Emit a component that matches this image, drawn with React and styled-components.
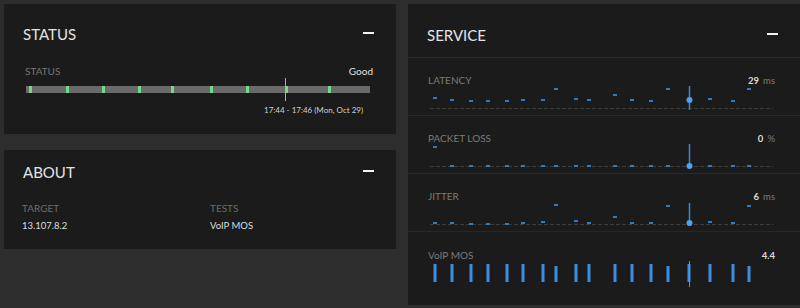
import React from "react";
import styled, { createGlobalStyle } from "styled-components";

const GlobalStyle = createGlobalStyle`
  html, body { margin: 0; padding: 0; background: #2d2d2d; }
  body { font-family: Lato, "Open Sans", sans-serif; color: #ddd; }
`;

const Page = styled.div`
  display: grid;
  grid-template-columns: 392px 392px;
  column-gap: 12px;
  padding: 4px 0 0 4px;
  height: 304px;
  overflow: hidden;
`;

const Column = styled.div`
  display: flex;
  flex-direction: column;
  gap: 16px;
`;

const Panel = styled.section`
  background: #1b1b1b;
  height: ${(p) => p.$h}px;
  box-sizing: border-box;
  display: flex;
  flex-direction: column;
`;

const Header = styled.div`
  display: flex;
  align-items: center;
  justify-content: space-between;
  height: ${(p) => p.$h}px;
  flex: none;
  padding: ${(p) => p.$pt || 0}px 22px 0 19px;
  box-sizing: border-box;
  border-bottom: ${(p) => (p.$divider ? "1px solid #282828" : "none")};
`;

const Title = styled.h2`
  margin: 0;
  font-size: 15px;
  font-weight: 400;
  color: #e4e4e4;
`;

const Minus = styled.span`
  display: block;
  width: 11px;
  height: 2px;
  background: #f2f2f2;
  margin-top: -2px;
`;

const Body = styled.div`
  padding: 0 23px 0 21px;
  display: flex;
  flex-direction: column;
`;

const LabelRow = styled.div`
  display: flex;
  justify-content: space-between;
  align-items: center;
  line-height: 14px;
`;

const Label = styled.span`
  font-size: 10px;
  color: #767676;
  text-transform: uppercase;
`;

const Strong = styled.span`
  font-size: 10px;
  color: #e0e0e0;
`;

const BarWrap = styled.div`
  position: relative;
  margin: 8px 3px 0 1px;
  height: 7px;
  background: #6a6a6a;
`;

const Tick = styled.span`
  position: absolute;
  top: 0;
  width: 3px;
  height: 7px;
  background: #74d98d;
`;

const Marker = styled.span`
  position: absolute;
  top: -8px;
  width: 1px;
  height: 23px;
  background: #b0b0b0;
`;

const TimeTip = styled.span`
  position: absolute;
  top: 19px;
  white-space: nowrap;
  font-size: 8px;
  line-height: 10px;
  color: #cfcfcf;
`;

const InfoGrid = styled.div`
  display: grid;
  grid-template-columns: 188px 1fr;
  padding: 7px 0 0 18px;
`;

const InfoCell = styled.div`
  display: flex;
  flex-direction: column;
  gap: 4px;
`;

const InfoLabel = styled.span`
  font-size: 10px;
  color: #6c6c6c;
  line-height: 14px;
`;

const InfoValue = styled.span`
  font-size: 9.5px;
  color: #dedede;
  line-height: 14px;
`;

const MetricRow = styled.div`
  height: ${(p) => p.$h}px;
  flex: none;
  box-sizing: border-box;
  padding: ${(p) => p.$pt}px 25px 0 20px;
  border-bottom: ${(p) => (p.$last ? "none" : "1px solid #282828")};
  display: flex;
  flex-direction: column;
`;

const MetricHead = styled.div`
  display: flex;
  justify-content: space-between;
  align-items: center;
  height: 12px;
`;

const MetricLabel = styled.span`
  font-size: 10px;
  color: #7a7a7a;
  line-height: 12px;
`;

const ValueGroup = styled.span`
  display: flex;
  align-items: baseline;
  gap: 4px;
`;

const Value = styled.span`
  font-size: 9.5px;
  font-weight: 700;
  color: #dcdcdc;
`;

const Unit = styled.span`
  font-size: 9.5px;
  color: #7d7d7d;
`;

const Chart = styled.svg`
  display: block;
  margin-left: 2px;
  overflow: visible;
`;

const XS = [5, 22, 41, 58, 77, 93, 113, 126, 146, 159, 185, 202, 221, 238, 259, 280, 303, 319];
const DASH = "#2f7bc8";
const DOT = "#4aa3f5";

function DashChart({ ys, lineFrom, lineTo, dotY }) {
  return (
    <Chart width="345" height="26">
      <line x1="0" x2="343" y1="22.5" y2="22.5" stroke="#3c3c3c" strokeWidth="1" strokeDasharray="4 2" />
      {XS.map((x, i) =>
        x === 259 ? null : (
          <rect key={i} x={x - 2} y={ys[i] - 1} width="4" height="2" fill={DASH} />
        )
      )}
      <line x1="259.5" x2="259.5" y1={lineFrom} y2={lineTo} stroke="#3a86d6" strokeWidth="1.5" />
      <circle cx="259.5" cy={dotY} r="3" fill={DOT} />
    </Chart>
  );
}

function MosChart() {
  const short = [126, 238, 319];
  return (
    <Chart width="345" height="26">
      {XS.map((x, i) => {
        const top = short.includes(x) ? 5 : 3;
        return <rect key={i} x={x - 1.5} y={top} width="3" height={21 - top} rx="0.5" fill="#3b8fe0" />;
      })}
      <line x1="259.5" x2="259.5" y1="0" y2="26" stroke="#8a8a8a" strokeWidth="1" />
    </Chart>
  );
}

const ticks = [30, 67, 103, 139, 172, 211, 247, 286, 329];

export default function App() {
  return (
    <>
      <GlobalStyle />
      <Page>
        <Column>
          <Panel $h={130}>
            <Header $h={60}>
              <Title>STATUS</Title>
              <Minus />
            </Header>
            <Body>
              <LabelRow>
                <Label>Status</Label>
                <Strong>Good</Strong>
              </LabelRow>
              <BarWrap>
                {ticks.map((t) => (
                  <Tick key={t} style={{ left: t - 27 }} />
                ))}
                <Marker style={{ left: 286 - 27 }} />
                <TimeTip style={{ left: 265 - 27 }}>17:44 - 17:46 (Mon, Oct 29)</TimeTip>
              </BarWrap>
            </Body>
          </Panel>
          <Panel $h={99}>
            <Header $h={44}>
              <Title>ABOUT</Title>
              <Minus />
            </Header>
            <InfoGrid>
              <InfoCell>
                <InfoLabel>TARGET</InfoLabel>
                <InfoValue>13.107.8.2</InfoValue>
              </InfoCell>
              <InfoCell>
                <InfoLabel>TESTS</InfoLabel>
                <InfoValue>VoIP MOS</InfoValue>
              </InfoCell>
            </InfoGrid>
          </Panel>
        </Column>
        <Panel $h={301}>
          <Header $h={54} $pt={8} $divider>
            <Title>SERVICE</Title>
            <Minus />
          </Header>
          <MetricRow $h={58} $pt={16}>
            <MetricHead>
              <MetricLabel>LATENCY</MetricLabel>
              <ValueGroup>
                <Value>29</Value>
                <Unit>ms</Unit>
              </ValueGroup>
            </MetricHead>
            <DashChart
              ys={[12, 14, 15, 15, 15, 14, 14, 3, 13, 14, 9, 14, 15, 3, 14, 13, 15, 3]}
              lineFrom={0}
              lineTo={24}
              dotY={14}
            />
          </MetricRow>
          <MetricRow $h={58} $pt={16}>
            <MetricHead>
              <MetricLabel>PACKET LOSS</MetricLabel>
              <ValueGroup>
                <Value>0</Value>
                <Unit>%</Unit>
              </ValueGroup>
            </MetricHead>
            <DashChart
              ys={[3, 22, 22, 22, 22, 22, 22, 22, 22, 22, 22, 22, 22, 22, 22, 22, 22, 22]}
              lineFrom={0}
              lineTo={22}
              dotY={22}
            />
          </MetricRow>
          <MetricRow $h={58} $pt={16}>
            <MetricHead>
              <MetricLabel>JITTER</MetricLabel>
              <ValueGroup>
                <Value>6</Value>
                <Unit>ms</Unit>
              </ValueGroup>
            </MetricHead>
            <DashChart
              ys={[21, 21, 22, 22, 22, 21, 20, 3, 19, 21, 15, 21, 21, 4, 21, 20, 21, 4]}
              lineFrom={1}
              lineTo={24}
              dotY={21}
            />
          </MetricRow>
          <MetricRow $h={73} $pt={17} $last>
            <MetricHead>
              <MetricLabel>VoIP MOS</MetricLabel>
              <Value>4.4</Value>
            </MetricHead>
            <MosChart />
          </MetricRow>
        </Panel>
      </Page>
    </>
  );
}
